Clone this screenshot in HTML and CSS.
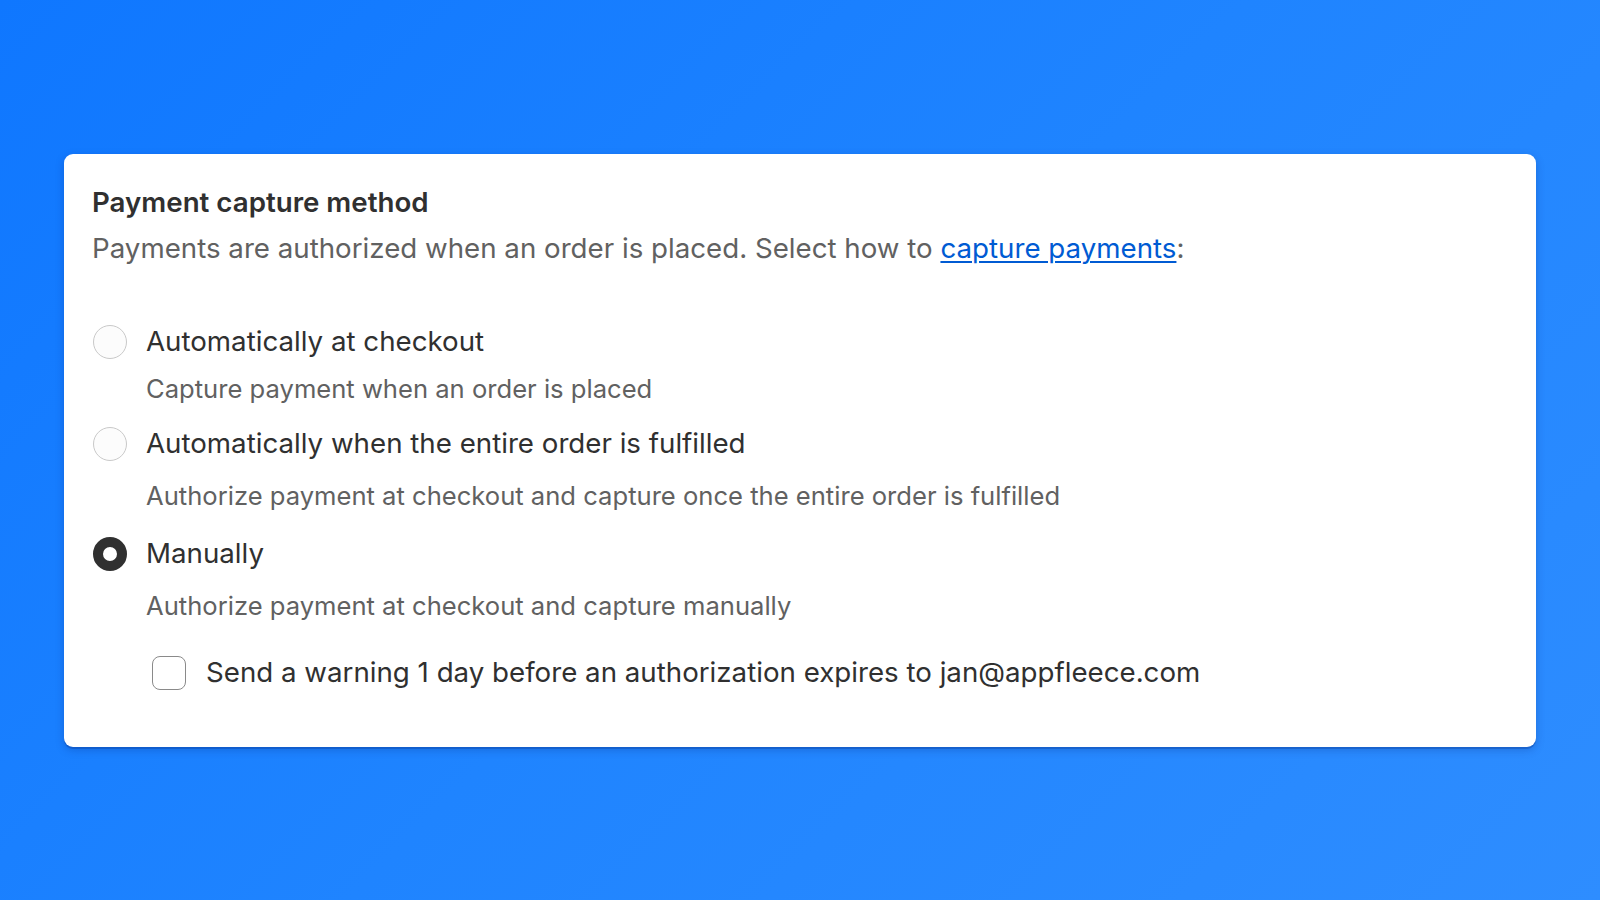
FILE: index.html
```html
<!DOCTYPE html>
<html lang="en">
<head>
<meta charset="utf-8">
<title>Payment capture method</title>
<link rel="stylesheet" href="styles.css">
</head>
<body>
  <section class="card">
    <h2 class="card-title">Payment capture method</h2>
    <p class="card-sub">Payments are authorized when an order is placed. Select how to <a href="#" class="link">capture payments</a>:</p>

    <div class="choices">
      <div class="choice choice-1">
        <div class="choice-row">
          <span class="radio"></span>
          <span class="choice-label">Automatically at checkout</span>
        </div>
        <div class="choice-help help-1">Capture payment when an order is placed</div>
      </div>

      <div class="choice choice-2">
        <div class="choice-row">
          <span class="radio"></span>
          <span class="choice-label">Automatically when the entire order is fulfilled</span>
        </div>
        <div class="choice-help help-2">Authorize payment at checkout and capture once the entire order is fulfilled</div>
      </div>

      <div class="choice choice-3">
        <div class="choice-row">
          <span class="radio radio-checked"></span>
          <span class="choice-label">Manually</span>
        </div>
        <div class="choice-help help-3">Authorize payment at checkout and capture manually</div>
        <div class="check-row">
          <span class="checkbox"></span>
          <span class="check-label">Send a warning 1 day before an authorization expires to jan@appfleece.com</span>
        </div>
      </div>
    </div>
  </section>
</body>
</html>
```

FILE: styles.css
```css
html, body {
  margin: 0;
  padding: 0;
}

body {
  width: 1600px;
  height: 900px;
  box-sizing: border-box;
  padding: 154px 64px 0 64px;
  background: linear-gradient(135deg, #0f77ff 0%, #1f84ff 50%, #2e8dff 100%);
  font-family: Inter, "Noto Sans", "Liberation Sans", sans-serif;
  color: #303030;
  overflow: hidden;
}

.card {
  background: #ffffff;
  border-radius: 9px;
  padding: 30px 28px 56px 28px;
  box-shadow: 0 2px 0 rgba(0, 40, 130, 0.25), 0 3px 9px rgba(0, 30, 110, 0.25);
}

.card-title {
  margin: 0;
  font-size: 27.7px;
  line-height: 37px;
  font-weight: 600;
  color: #303030;
}

.card-sub {
  margin: 9px 0 0 0;
  font-size: 27.7px;
  line-height: 37px;
  color: #616161;
}

.link {
  color: #005bd3;
  text-decoration: underline;
  text-underline-offset: 3px;
  text-decoration-thickness: 2px;
}

.choices {
  margin-top: 56px;
  display: flex;
  flex-direction: column;
}

.choice-row {
  display: flex;
  align-items: center;
  gap: 19px;
  height: 37px;
}

.radio {
  width: 34px;
  height: 34px;
  box-sizing: border-box;
  border-radius: 50%;
  border: 1.5px solid #c9c9c9;
  background: #fcfcfc;
  flex: none;
  margin-left: 1px;
}

.radio-checked {
  border: 10px solid #303030;
  background: #ffffff;
}

.choice-label {
  font-size: 27.7px;
  line-height: 37px;
  color: #303030;
}

.choice-help {
  padding-left: 54px;
  font-size: 25.6px;
  line-height: 37px;
  color: #616161;
}

.help-1 { margin-top: 10px; }
.help-2 { margin-top: 15px; }
.help-3 { margin-top: 15px; }

.choice-2 { margin-top: 18px; }
.choice-3 { margin-top: 21px; }

.check-row {
  margin-top: 30px;
  padding-left: 60px;
  display: flex;
  align-items: center;
  gap: 20px;
  height: 37px;
}

.checkbox {
  width: 34px;
  height: 34px;
  box-sizing: border-box;
  border: 1.5px solid #8a8a8a;
  border-radius: 8px;
  background: #ffffff;
  flex: none;
}

.check-label {
  font-size: 27.7px;
  line-height: 37px;
  color: #303030;
}
```
